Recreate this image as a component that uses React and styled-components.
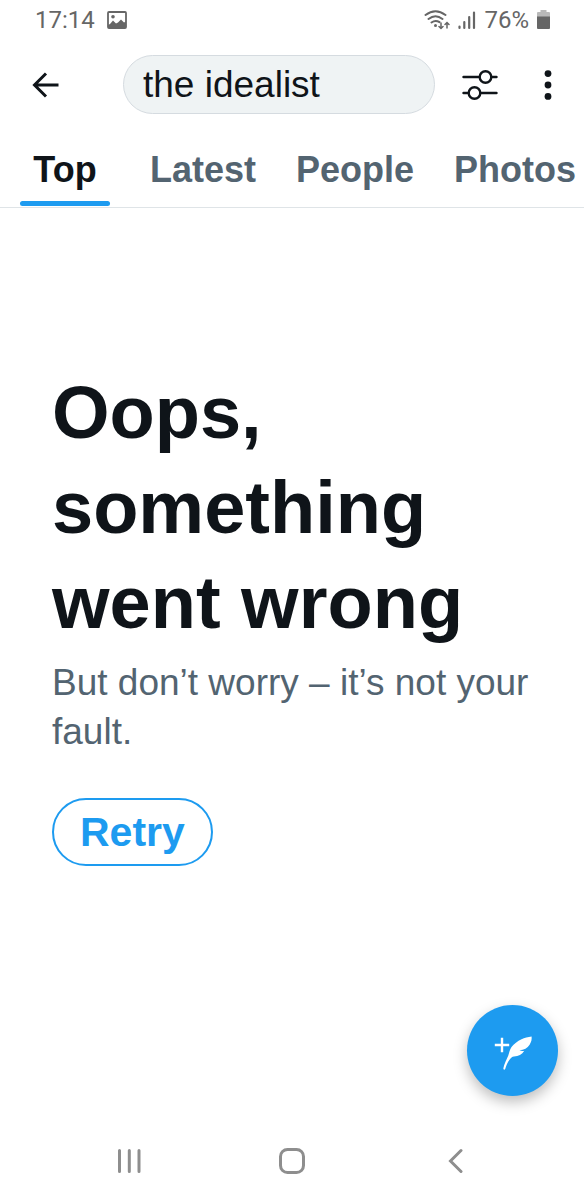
import React, { useState } from "react";
import styled, { createGlobalStyle } from "styled-components";

const ink = "#0f1419";
const slate = "#536471";
const blue = "#1d9bf0";
const grey = "#666666";
const navGrey = "#8e8e8e";

const GlobalStyle = createGlobalStyle`
  *, *::before, *::after { box-sizing: border-box; }
  body {
    margin: 0;
    background: #fff;
    color: ${ink};
    font-family: "Liberation Sans", Arial, sans-serif;
  }
  button, input { font: inherit; color: inherit; }
  svg { display: block; }
`;

const Screen = styled.div`
  display: flex;
  flex-direction: column;
  min-height: 100vh;
`;

const StatusBar = styled.div`
  display: flex;
  align-items: center;
  justify-content: space-between;
  height: 40px;
  padding: 0 34px 0 35px;
  color: ${grey};
  font-family: Roboto, sans-serif;
  font-size: 24px;
  line-height: 40px;
`;

const StatusGroup = styled.div`
  display: flex;
  align-items: center;
  gap: ${(p) => p.$gap}px;
`;

const Toolbar = styled.header`
  display: flex;
  align-items: center;
  height: 89px;
  padding: 0 20px;
`;

const IconButton = styled.button`
  display: flex;
  align-items: center;
  justify-content: center;
  flex: none;
  width: ${(p) => p.$width}px;
  height: 52px;
  padding: 0;
  border: 0;
  background: none;
  cursor: pointer;
`;

const MoreButton = styled(IconButton)`
  margin-left: 26px;
`;

const SearchForm = styled.form`
  flex: 1;
  min-width: 0;
  margin: 0 19px 0 51px;
`;

const SearchInput = styled.input`
  display: block;
  width: 100%;
  height: 59px;
  padding: 0 19px;
  border: 1px solid #d5dbe0;
  border-radius: 30px;
  background: #eff3f4;
  font-size: 37px;
  outline: none;
`;

const TabBar = styled.nav`
  display: flex;
  height: 79px;
  border-bottom: 1px solid #dfe4e7;
  overflow-x: auto;
  scrollbar-width: none;
`;

const Tab = styled.button`
  flex: none;
  padding: 0 20px;
  border: 0;
  background: none;
  color: ${(p) => (p.$active ? ink : slate)};
  font-size: 36px;
  font-weight: 700;
  cursor: pointer;
`;

const TabLabel = styled.span`
  display: flex;
  flex-direction: column;
  height: 78px;
  min-width: 90px;
  line-height: 81px;

  &::after {
    content: "";
    height: 5px;
    margin-top: -9px;
    border-radius: 3px;
    background: ${(p) => (p.$active ? blue : "transparent")};
  }
`;

const Content = styled.main`
  flex: 1;
  padding: 157px 40px 40px 52px;
`;

const Title = styled.h1`
  max-width: 480px;
  margin: 0 0 8px;
  font-size: 74px;
  font-weight: 700;
  line-height: 95px;
`;

const Message = styled.p`
  margin: 0 0 42px;
  color: ${slate};
  font-size: 37px;
  line-height: 49px;
`;

const RetryButton = styled.button`
  height: 68px;
  padding: 0 26px;
  border: 2px solid ${blue};
  border-radius: 34px;
  background: #fff;
  color: ${blue};
  font-size: 41px;
  font-weight: 700;
  cursor: pointer;
`;

const ComposeButton = styled.button`
  position: fixed;
  right: 26px;
  bottom: 104px;
  display: flex;
  align-items: center;
  justify-content: center;
  width: 91px;
  height: 91px;
  padding: 0;
  border: 0;
  border-radius: 50%;
  background: ${blue};
  color: #fff;
  box-shadow: 0 6px 14px rgba(0, 0, 0, 0.26);
  cursor: pointer;
`;

const SystemNav = styled.footer`
  display: grid;
  grid-template-columns: repeat(3, 1fr);
  justify-items: center;
  align-items: center;
  height: 78px;
  padding: 0 47px;
  color: ${navGrey};
`;

const PictureIcon = () => (
  <svg width="20" height="20" viewBox="0 0 20 20" aria-hidden="true">
    <rect x="1" y="2" width="18" height="16" rx="1" fill="none" stroke="currentColor" strokeWidth="1.8" />
    <circle cx="6" cy="6.800" r="1.800" fill="currentColor" />
    <path d="M1 15l2-1 3-3.500 3 3 2-1 3-3 3 3 2-1V18H1z" fill="currentColor" />
  </svg>
);

const WifiIcon = () => (
  <svg width="26" height="22" viewBox="0 0 26 22" aria-hidden="true" fill="none" stroke="currentColor" strokeWidth="2" strokeLinecap="round">
    <path d="M1.500 6Q11.500 -1.500 21.500 6M4.500 10Q11.500 4.500 18.500 10M7.500 13.500Q11.500 10.500 15.500 13.200" />
    <circle cx="11.500" cy="16.500" r="1.500" fill="currentColor" stroke="none" />
    <path d="M17 14v5.500M15 17.500l2 2 2-2M23 19v-5.500M21 15.500l2-2 2 2" strokeWidth="1.500" />
  </svg>
);

const SignalIcon = () => (
  <svg width="18" height="20" viewBox="0 0 18 20" aria-hidden="true" stroke="currentColor" strokeWidth="2.200" strokeLinecap="round">
    <path d="M1.500 16.500v1.500M6.300 12v6M11.200 7v11M16 2.500v15.500" />
  </svg>
);

const BatteryIcon = () => (
  <svg width="13" height="20" viewBox="0 0 13 20" aria-hidden="true">
    <path d="M3.500 0h6v2H12q1 0 1 1v4H0V3q0-1 1-1h2.500z" fill="#b9b9b9" />
    <path d="M0 6.500h13V18q0 1-1 1H1q-1 0-1-1z" fill="currentColor" />
  </svg>
);

const BackIcon = () => (
  <svg width="28" height="28" viewBox="0 0 28 28" aria-hidden="true" fill="none" stroke="currentColor" strokeWidth="3">
    <path d="M26.500 14H3M14 2.500L2.500 14 14 25.500" />
  </svg>
);

const SlidersIcon = () => (
  <svg width="36" height="32" viewBox="0 0 36 32" aria-hidden="true" fill="none" stroke="currentColor" strokeWidth="2.400">
    <path d="M1.500 8H17M29.500 8H34.500M1.500 24h4.500M18.500 24h16" strokeLinecap="round" />
    <circle cx="23.500" cy="8" r="5.800" />
    <circle cx="12.500" cy="24" r="5.800" />
  </svg>
);

const MoreIcon = () => (
  <svg width="8" height="30" viewBox="0 0 8 30" aria-hidden="true" fill="currentColor">
    <circle cx="4" cy="3.600" r="3.400" />
    <circle cx="4" cy="15" r="3.400" />
    <circle cx="4" cy="26.400" r="3.400" />
  </svg>
);

const FeatherIcon = () => (
  <svg width="38" height="40" viewBox="0 0 38 40" aria-hidden="true">
    <path d="M8 6.800v14.400M.8 14h14.400" stroke="currentColor" strokeWidth="2.400" fill="none" />
    <path
      d="M37.600 5.600C34 6 30.500 6.800 27.500 8.300C23.500 10.300 20 12.800 17.500 16C15.800 18.500 15.300 21.500 14.300 24.500C12.800 28.500 10 33 9.300 37.500Q10 39.600 11.200 38C12.200 34.500 13.600 31.500 15.500 28.800C17 26.800 18 25.600 20 25.500C24.500 25.500 28 23.500 30.300 19.800C28.800 20.300 27.200 20.100 25.500 19.300C30 18.900 33.500 17 35.600 13.700C37.400 11 37.900 8.500 37.600 5.600z"
      fill="currentColor"
    />
  </svg>
);

const RecentsIcon = () => (
  <svg width="24" height="26" viewBox="0 0 24 26" aria-hidden="true" stroke="currentColor" strokeWidth="3" strokeLinecap="round">
    <path d="M2.500 2.500v21M12.300 2.500v21M22 2.500v21" />
  </svg>
);

const HomeIcon = () => (
  <svg width="26" height="26" viewBox="0 0 26 26" aria-hidden="true" fill="none" stroke="currentColor" strokeWidth="3">
    <rect x="1.500" y="1.500" width="23" height="23" rx="7" />
  </svg>
);

const NavBackIcon = () => (
  <svg width="16" height="26" viewBox="0 0 16 26" aria-hidden="true" fill="none" stroke="currentColor" strokeWidth="3" strokeLinecap="round">
    <path d="M14 2.500L3.500 13 14 23.500" />
  </svg>
);

const tabs = ["Top", "Latest", "People", "Photos"];

export default function App() {
  const [active, setActive] = useState("Top");
  const [query, setQuery] = useState("the idealist");

  return (
    <>
      <GlobalStyle />
      <Screen>
        <StatusBar>
          <StatusGroup $gap={12}>
            <span>17:14</span>
            <PictureIcon />
          </StatusGroup>
          <StatusGroup $gap={8}>
            <WifiIcon />
            <SignalIcon />
            <span>76%</span>
            <BatteryIcon />
          </StatusGroup>
        </StatusBar>
        <Toolbar>
          <IconButton type="button" $width={52} aria-label="Back">
            <BackIcon />
          </IconButton>
          <SearchForm role="search" onSubmit={(e) => e.preventDefault()}>
            <SearchInput
              type="text"
              aria-label="Search"
              value={query}
              onChange={(e) => setQuery(e.target.value)}
            />
          </SearchForm>
          <IconButton type="button" $width={52} aria-label="Search filters">
            <SlidersIcon />
          </IconButton>
          <MoreButton type="button" $width={32} aria-label="More options">
            <MoreIcon />
          </MoreButton>
        </Toolbar>
        <TabBar>
          {tabs.map((name) => (
            <Tab
              key={name}
              type="button"
              $active={name === active}
              aria-pressed={name === active}
              onClick={() => setActive(name)}
            >
              <TabLabel $active={name === active}>{name}</TabLabel>
            </Tab>
          ))}
        </TabBar>
        <Content>
          <Title>Oops, something went wrong</Title>
          <Message>But don’t worry – it’s not your fault.</Message>
          <RetryButton type="button">Retry</RetryButton>
        </Content>
        <SystemNav>
          <IconButton type="button" $width={52} aria-label="Recent apps">
            <RecentsIcon />
          </IconButton>
          <IconButton type="button" $width={52} aria-label="Home">
            <HomeIcon />
          </IconButton>
          <IconButton type="button" $width={52} aria-label="Go back">
            <NavBackIcon />
          </IconButton>
        </SystemNav>
        <ComposeButton type="button" aria-label="Compose">
          <FeatherIcon />
        </ComposeButton>
      </Screen>
    </>
  );
}
